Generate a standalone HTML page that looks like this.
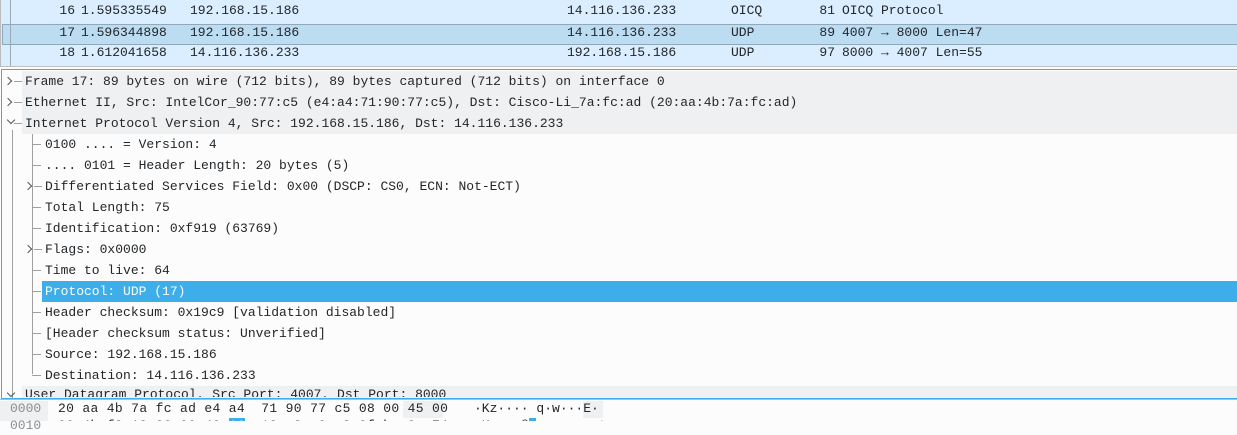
<!DOCTYPE html><html><head><style>
body{margin:0;width:1237px;height:421px;overflow:hidden;background:#fcfcfc;font-family:"Liberation Mono",monospace;font-size:13px;color:#232629;position:relative}
.a{position:absolute;white-space:pre;line-height:21px}
.n{position:absolute;white-space:pre;line-height:21px;text-align:right;width:40px}
.r{position:absolute;left:0;width:1237px;height:21px}
.vl{position:absolute;width:1px;background:#a0a0a0}
.hl{position:absolute;height:1px;background:#a0a0a0;width:9px}
.chev{position:absolute;width:5px;height:5px;border-right:1px solid #555;border-bottom:1px solid #555}
</style></head><body>
<!-- packet list -->
<div style="position:absolute;left:0;top:0;width:1237px;height:66px;background:#daeeff;border-bottom:1px solid #c0c0c0"></div>
<div style="position:absolute;left:2px;top:24px;width:1235px;height:19px;background:#bcdcf2;border-top:1px solid #8fa8bb;border-bottom:1px solid #8fa8bb;border-left:1px solid #8fa8bb"></div>
<div class="vl" style="left:10px;top:0;height:66px;background:#9aaab5"></div>
<div class="vl" style="left:0;top:0;height:66px;background:#bbb"></div>
<div class="n" style="top:0;left:35px">16</div><div class="a" style="top:0;left:81px">1.595335549</div><div class="a" style="top:0;left:190px">192.168.15.186</div>
<div class="a" style="top:0;left:567px">14.116.136.233</div><div class="a" style="top:0;left:731px">OICQ</div><div class="n" style="top:0;left:795px">81</div><div class="a" style="top:0;left:842px">OICQ Protocol</div>
<div class="n" style="top:22px;left:35px">17</div><div class="a" style="top:22px;left:81px">1.596344898</div><div class="a" style="top:22px;left:190px">192.168.15.186</div>
<div class="a" style="top:22px;left:567px">14.116.136.233</div><div class="a" style="top:22px;left:731px">UDP</div><div class="n" style="top:22px;left:795px">89</div><div class="a" style="top:22px;left:842px">4007 → 8000 Len=47</div>
<div class="n" style="top:42px;left:35px">18</div><div class="a" style="top:42px;left:81px">1.612041658</div><div class="a" style="top:42px;left:190px">14.116.136.233</div>
<div class="a" style="top:42px;left:567px">192.168.15.186</div><div class="a" style="top:42px;left:731px">UDP</div><div class="n" style="top:42px;left:795px">97</div><div class="a" style="top:42px;left:842px">8000 → 4007 Len=55</div>
<!-- details -->
<div style="position:absolute;left:1px;top:69px;width:1236px;height:328px;border-top:1px solid #3daee9;border-left:1px solid #3daee9;border-bottom:1px solid #3daee9;overflow:hidden;background:#fcfcfc">
<div class="r" style="top:1px;background:#eff0f1;left:20px"></div>
<div class="r" style="top:22px;background:#eff0f1;left:20px"></div>
<div class="r" style="top:43px;background:#eff0f1;left:20px"></div>
<div class="r" style="top:211px;background:#3daee9;left:40px"></div>
<div class="r" style="top:316px;background:#eff0f1;left:20px"></div>
<div class="vl" style="left:10px;top:60px;height:270px"></div>
<div class="vl" style="left:30px;top:64px;height:240px"></div>
</div>
<div class="chev" style="left:5px;top:78px;transform:rotate(-45deg)"></div><div class="hl" style="left:14px;top:81px;width:8px"></div>
<div class="chev" style="left:5px;top:99px;transform:rotate(-45deg)"></div><div class="hl" style="left:14px;top:102px;width:8px"></div>
<div class="chev" style="left:8px;top:117px;transform:rotate(45deg)"></div><div class="hl" style="left:14px;top:123px;width:8px"></div>
<div class="chev" style="left:8px;top:390px;transform:rotate(45deg)"></div>
<div class="hl" style="left:32px;top:144px"></div><div class="hl" style="left:32px;top:165px"></div>
<div class="chev" style="left:25px;top:183px;transform:rotate(-45deg)"></div><div class="hl" style="left:34px;top:186px;width:8px"></div>
<div class="hl" style="left:32px;top:207px"></div><div class="hl" style="left:32px;top:228px"></div>
<div class="chev" style="left:25px;top:246px;transform:rotate(-45deg)"></div><div class="hl" style="left:34px;top:249px;width:8px"></div>
<div class="hl" style="left:32px;top:270px"></div><div class="hl" style="left:32px;top:291px"></div><div class="hl" style="left:32px;top:312px"></div><div class="hl" style="left:32px;top:333px"></div><div class="hl" style="left:32px;top:354px"></div><div class="hl" style="left:32px;top:375px"></div>
<div class="a" style="top:71px;left:25px">Frame 17: 89 bytes on wire (712 bits), 89 bytes captured (712 bits) on interface 0</div>
<div class="a" style="top:92px;left:25px">Ethernet II, Src: IntelCor_90:77:c5 (e4:a4:71:90:77:c5), Dst: Cisco-Li_7a:fc:ad (20:aa:4b:7a:fc:ad)</div>
<div class="a" style="top:113px;left:25px">Internet Protocol Version 4, Src: 192.168.15.186, Dst: 14.116.136.233</div>
<div class="a" style="top:134px;left:45px">0100 .... = Version: 4</div>
<div class="a" style="top:155px;left:45px">.... 0101 = Header Length: 20 bytes (5)</div>
<div class="a" style="top:176px;left:45px">Differentiated Services Field: 0x00 (DSCP: CS0, ECN: Not-ECT)</div>
<div class="a" style="top:197px;left:45px">Total Length: 75</div>
<div class="a" style="top:218px;left:45px">Identification: 0xf919 (63769)</div>
<div class="a" style="top:239px;left:45px">Flags: 0x0000</div>
<div class="a" style="top:260px;left:45px">Time to live: 64</div>
<div class="a" style="top:281px;left:45px;color:#fcfcfc">Protocol: UDP (17)</div>
<div class="a" style="top:302px;left:45px">Header checksum: 0x19c9 [validation disabled]</div>
<div class="a" style="top:323px;left:45px">[Header checksum status: Unverified]</div>
<div class="a" style="top:344px;left:45px">Source: 192.168.15.186</div>
<div class="a" style="top:365px;left:45px">Destination: 14.116.136.233</div>
<div style="position:absolute;top:386px;left:0;width:1237px;height:11px;overflow:hidden"><div class="a" style="top:-2px;left:25px">User Datagram Protocol, Src Port: 4007, Dst Port: 8000</div></div>
<div style="position:absolute;left:0;top:399px;width:1237px;height:1px;background:#bbb"></div>
<!-- hex -->
<div style="position:absolute;left:0;top:401px;width:48px;height:20px;background:#eff0f1"></div>
<div style="position:absolute;left:403px;top:401px;width:40px;height:17px;background:#eff0f1"></div>
<div style="position:absolute;left:583px;top:401px;width:20px;height:17px;background:#eff0f1"></div>
<div style="position:absolute;left:58px;top:401px;width:600px;height:20px;overflow:hidden">
<div class="a" style="top:-2px;left:0;line-height:19px;letter-spacing:0.33px">20 aa 4b 7a fc ad e4 a4  71 90 77 c5 08 00 45 00</div>
<div class="a" style="top:15px;left:0;line-height:19px;letter-spacing:0.33px">00 4b f9 19 00 00 40 <span style="background:#3daee9;color:#fff">11</span>  19 c9 c0 a8 0f ba 0e 74</div>
<div class="a" style="top:-2px;left:416px;line-height:19px">·Kz···· q·w···E·</div>
<div class="a" style="top:15px;left:416px;line-height:19px">·K····@<span style="background:#3daee9;color:#fff">·</span> ·······t</div>
</div>
<div class="a" style="top:399px;left:10px;line-height:19px;color:#8a8d90">0000</div>
<div class="a" style="top:416px;left:10px;line-height:19px;color:#8a8d90">0010</div>
</body></html>
